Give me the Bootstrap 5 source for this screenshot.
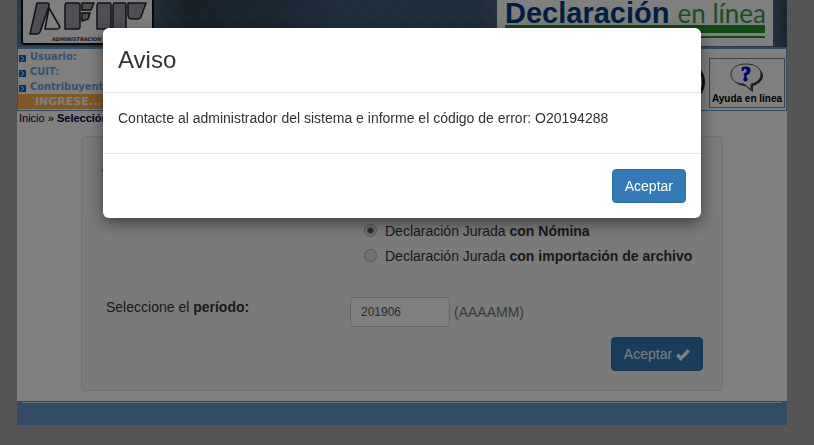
<!DOCTYPE html>
<html lang="es">
<head>
<meta charset="utf-8">
<meta name="viewport" content="width=device-width, initial-scale=1">
<title>Declaración en línea</title>
<link href="https://cdn.jsdelivr.net/npm/bootstrap@5.3.0/dist/css/bootstrap.min.css" rel="stylesheet">
<style>
  html, body { min-height: 100%; }
  body { background: #aaa; font-family: "Liberation Sans", Arial, sans-serif; font-size: 14px; line-height: 20px; color: #333; }
  .page-wrap { padding: 0 27px 20px 17px; }
  .sheet { background: #fff; }
  .banner { background: repeating-linear-gradient(45deg, rgba(255,255,255,.05) 0 1px, transparent 1px 2px), linear-gradient(90deg, #51789c 0, #41627f 16%, #2c3e4c 22%, #2f4961 34%, #3d5b78 42%, #3a5874 60%, #62788a 70%, #4d7096 97%, #2f4358 100%); height: 47px; padding-right: 14px; }
  .crest { margin-left: 4px; width: 134px; height: 47px; }
  .brand { background: #fff; width: 276px; height: 46px; padding: 0 8px; }
  .brand-title { font-size: 29px; line-height: 27px; margin-bottom: -2px; font-weight: 700; color: #003d86; white-space: nowrap; }
  .brand-title span { font-family: Lato, sans-serif; font-weight: 400; font-size: 26px; line-height: 20px; color: #379b3c; }
  .brand-bar { background: #239629; height: 8px; }
  .brand-line { background: #239629; height: 2px; margin-top: 3px; }
  .session { border: 1px solid #5c9bd5; border-top-width: 2px; height: 64px; }
  .session-list { font: 700 11px/15px "DejaVu Sans Condensed", "DejaVu Sans", sans-serif; color: #6ca5df; width: 180px; padding-left: 1px; }
  .session-list li { height: 15px; }
  .session-list svg { width: 7px; height: 7px; margin: 6px 4px 0 0; }
  .enter { background: #ffb04a; color: #fff; font: 700 11px/16px "DejaVu Sans", sans-serif; padding-left: 17px; height: 15px; }
  .help { border: 1px solid #888; width: 76px; height: 50px; margin: 9px 1px 0 0; color: #000; font-size: 10px; font-weight: 700; line-height: 12px; text-decoration: none; padding-top: 4px; }
  .round-tool { border: 3px solid #222; border-radius: 50%; width: 42px; height: 42px; margin: 12px 4px 0 0; }
  .crumbs { font-size: 11px; line-height: 14px; padding-left: 2px; color: #000; }
  .crumbs a { color: #000040; text-decoration: none; }
  .panel-box { background: #f5f5f5; border: 1px solid #e3e3e3; border-radius: 4px; margin: 11px 64px 0; padding: 19px 19px 19px 24px; }
  .panel-box legend { font-size: 21px; line-height: 16px; margin: 0 0 46px -4px; color: #333; }
  .choices { padding-left: 258px; margin-bottom: 18px; }
  .choices label { height: 25px; line-height: 20px; gap: 8px; }
  .choices input { width: 13px; height: 13px; margin: 0; appearance: none; border: 1px solid #aaa; border-radius: 50%; background: #e4e4e4; }
  .choices input:checked { background: radial-gradient(circle, #555 0 2px, #e4e4e4 4px); }
  .rule { border-top: 1px solid #eee; }
  .period { padding-top: 10px; }
  .period label { width: 244px; }
  .period input { width: 100px; height: 30px; font-size: 12px; line-height: 18px; padding: 5px 10px; color: #555; border: 1px solid #ccc; border-radius: 3px; background: #fff; }
  .hint { color: #737373; margin-left: 4px; }
  .actions { padding-top: 10px; }
  .btn-primary { --bs-btn-bg: #337ab7; --bs-btn-border-color: #2e6da4; font-size: 14px; line-height: 20px; border-radius: 4px; padding: 6px 12px; }
  .foot { background: #6699cc; height: 24px; padding: 1px 5px; margin-top: 10px; }
  .foot hr { margin: 0; border-top: 1px solid #ddd; opacity: 1; }
  .modal { padding-right: 10px; }
  .modal-dialog { max-width: 598px; margin: 28px auto; }
  .modal-content { border: 0; border-radius: 6px; box-shadow: 0 5px 15px rgba(0,0,0,.5); color: #333; }
  .modal-header { padding: 15px; height: 65px; align-items: flex-start; border-color: #e5e5e5; }
  .modal-title { font-size: 24px; line-height: 34px; font-weight: 400; }
  .modal-body { padding: 15px 15px 25px; }
  .modal-footer { padding: 15px; border-color: #e5e5e5; }
  .modal-footer > * { margin: 0; }
</style>
<script src="https://cdn.jsdelivr.net/npm/bootstrap@5.3.0/dist/js/bootstrap.bundle.min.js"></script>
</head>
<body>
<div class="page-wrap">
  <div class="sheet">
    <header class="banner d-flex justify-content-between">
      <svg class="crest" viewBox="0 0 134 47" role="img" aria-label="AFIP">
        <rect x="1" y="-6" width="131" height="50" rx="2" fill="#fff" stroke="#111" stroke-width="2"/>
        <g fill="#9c9ca8" stroke="#222" stroke-width="1.500" stroke-linejoin="round">
          <path d="M28 8L39 27Q38 29 36 29H24Z" fill="#fff"/>
          <path d="M16 3H26Q29 3 28 6L19 32Q18 34 16 34H9Z"/>
          <path d="M46 3H57Q59 3 59 5V27Q59 29 57 29H44V6Q44 3 46 3ZM61 3H73L70 10H61ZM61 13H69L67 19L61 21Z"/>
          <path d="M77 3H89Q90 3 90 5V29H76V5ZM93 3H104Q105 3 105 5V29H92V5ZM107 3H125L120 17Q119 19 117 19H111Q107 19 107 15Z"/>
        </g>
        <text x="31" y="41" font-size="5" font-style="italic" font-weight="700" font-family="DejaVu Sans" fill="#333">ADMINISTRACION</text>
      </svg>
      <div class="brand">
        <div class="brand-title">Declaración <span>en línea</span></div>
        <div class="brand-bar"></div>
        <div class="brand-line"></div>
      </div>
    </header>
    <section class="session d-flex justify-content-between">
      <div>
        <ul class="session-list list-unstyled mb-0">
          <li class="d-flex"><svg viewBox="0 0 7 7"><path fill="#0a62c8" d="M0 0h7v7H0z"/><path d="M2 1l3 2.500-3 2.500" fill="none" stroke="#fff"/></svg>Usuario:</li>
          <li class="d-flex"><svg viewBox="0 0 7 7"><path fill="#0a62c8" d="M0 0h7v7H0z"/><path d="M2 1l3 2.500-3 2.500" fill="none" stroke="#fff"/></svg>CUIT:</li>
          <li class="d-flex"><svg viewBox="0 0 7 7"><path fill="#0a62c8" d="M0 0h7v7H0z"/><path d="M2 1l3 2.500-3 2.500" fill="none" stroke="#fff"/></svg>Contribuyente:</li>
        </ul>
        <div class="enter">INGRESE...</div>
      </div>
      <div class="d-flex">
        <div class="round-tool"></div>
        <a class="help d-flex flex-column align-items-center" href="#">
          <svg width="34" height="30" viewBox="0 0 34 30"><path d="M18 3C27 3 33 7 33 13C33 18 28 21 23 23L23 29L15 23C7 22 4 19 3 14Z" fill="#333"/><path d="M16 1C25 1 31 5 31 11C31 16 27 20 21 21L21 27L14 21C6 21 1 17 1 11C1 5 7 1 16 1Z" fill="#fff" stroke="#555"/><text x="16" y="18" text-anchor="middle" font-family="Liberation Serif" font-weight="700" font-size="20" fill="#0000d8" stroke="#0000d8">?</text></svg>
          Ayuda en linea
        </a>
      </div>
    </section>
    <nav class="crumbs" aria-label="Ruta"><a href="#">Inicio</a> » <a href="#"><b>Selección</b></a></nav>
    <form class="panel-box">
      <fieldset>
        <legend>A</legend>
        <div class="choices d-flex flex-column">
          <label class="d-flex align-items-center"><input type="radio" name="tipo" checked><span>Declaración Jurada <b>con Nómina</b></span></label>
          <label class="d-flex align-items-center"><input type="radio" name="tipo"><span>Declaración Jurada <b>con importación de archivo</b></span></label>
        </div>
      </fieldset>
      <div class="rule"></div>
      <div class="period d-flex">
        <label for="periodo">Seleccione el <b>período:</b></label>
        <input id="periodo" type="text" value="201906">
        <span class="hint align-self-center">(AAAAMM)</span>
      </div>
      <div class="actions d-flex justify-content-end">
        <button type="button" class="btn btn-primary">Aceptar <svg width="14" height="12" viewBox="0 0 14 12"><path d="M0 7L2.500 4.500L5 7L11.500 0L14 2.500L5 12Z" fill="#fff"/></svg></button>
      </div>
    </form>
    <footer class="foot"><hr></footer>
  </div>
</div>

<div class="modal-backdrop show"></div>
<div class="modal show d-block" tabindex="-1" role="dialog" aria-labelledby="aviso">
  <div class="modal-dialog">
    <div class="modal-content">
      <div class="modal-header"><h4 class="modal-title" id="aviso">Aviso</h4></div>
      <div class="modal-body">Contacte al administrador del sistema e informe el código de error: O20194288</div>
      <div class="modal-footer"><button type="button" class="btn btn-primary">Aceptar</button></div>
    </div>
  </div>
</div>
</body>
</html>
